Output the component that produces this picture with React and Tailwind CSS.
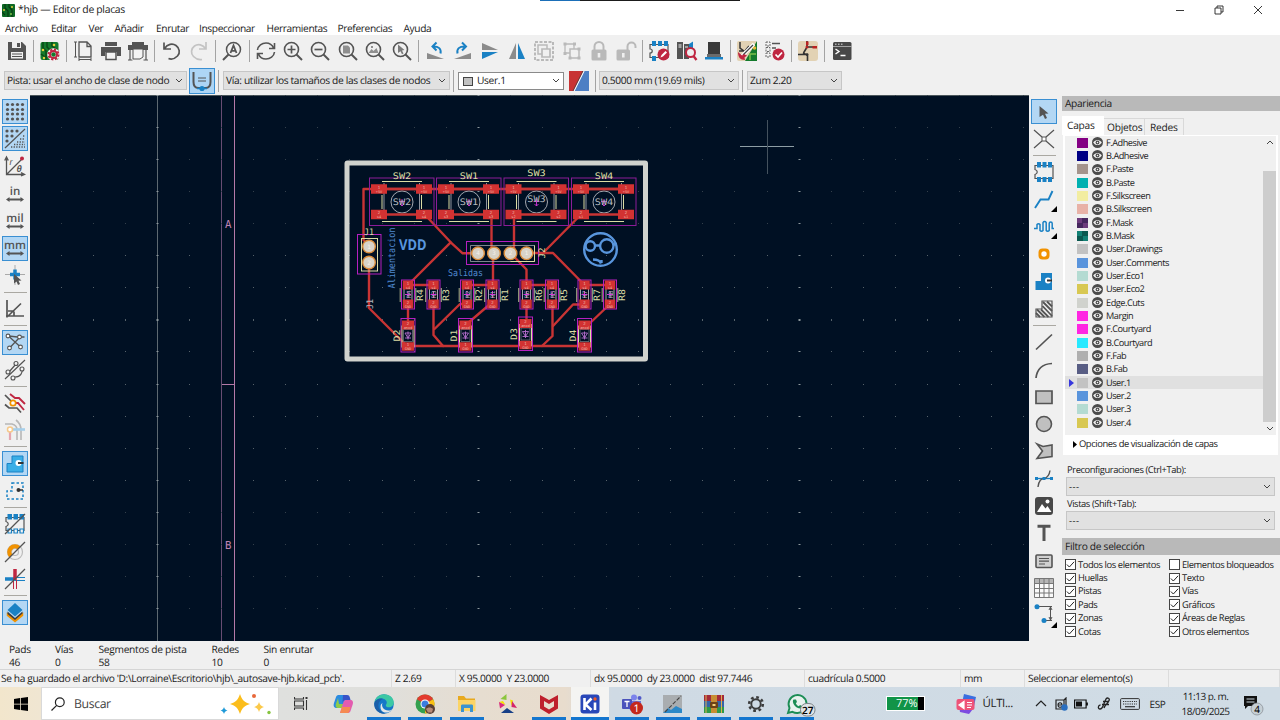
import React from "react";

const G = "#545454";
const B = "#1a81c4";
const R = "#bf2641";
const LG = "#b9b9b9";

/* ---------- icons, all drawn on a 20 x 20 grid ---------- */
const lens = (
  <>
    <circle cx="8.5" cy="8.5" r="7" stroke={G} strokeWidth="1.6" />
    <path d="M13.5 13.5L19 19" stroke={G} strokeWidth="2" />
  </>
);
const sq = (x, y, c = G, s = 2) => <rect key={x + "-" + y} x={x} y={y} width={s} height={s} fill={c} />;

const icons = {
  save: (
    <>
      <path d="M1 1h14l4 4v14H1z" fill={G} />
      <path d="M5 1h9v6H5z" fill="#f0f0f0" />
      <path d="M10 2h3v4h-3z" fill={G} />
      <path d="M4 11h12v6.500H4z" fill="#f0f0f0" />
      <path d="M5 13h10M5 15.500h10" stroke={G} strokeWidth="1" />
    </>
  ),
  board: (
    <>
      <rect x="0.500" y="1" width="18" height="18" rx="2" fill="#137a2c" />
      <path d="M3 1v6l3 3v9M7 1v5l4 4M12 1v4l5 4M1 13l4 3" stroke="#0a4a17" strokeWidth="1.500" />
      <circle cx="3" cy="9" r="1.300" fill="#e3d13c" />
      <circle cx="14" cy="4" r="1.300" fill="#e3d13c" />
      <circle cx="4" cy="17" r="1.200" fill="#e3d13c" />
      <circle cx="13.500" cy="13.500" r="4.300" stroke="#f3f3f3" strokeWidth="4" />
      <circle cx="13.500" cy="13.500" r="5" stroke={R} strokeWidth="2" strokeDasharray="2.200 1.700" />
      <circle cx="13.500" cy="13.500" r="3.500" stroke={R} strokeWidth="2" />
    </>
  ),
  page: (
    <>
      <path d="M5 1h8l4 4v11H5zM13 1v4.500h4" stroke={G} strokeWidth="1.300" />
      <path d="M1.500 1v15M0 1h3M0 16h3M5 18.500h12M5 17v3M17 17v3" stroke={G} strokeWidth="1" />
    </>
  ),
  print: (
    <>
      <path d="M4 1h12v4H4zM0 6h20v9h-4v-4H4v4H0z" fill={G} />
      <path d="M5 11h10v7.500H5z" stroke={G} strokeWidth="1.500" fill="#f4f4f4" />
    </>
  ),
  plot: (
    <>
      <path d="M4 1h12v3H4zM0 4h20v5H0z" fill={G} />
      <path d="M5 8h10v8l-3 2H5z" stroke={G} strokeWidth="1" fill="#f4f4f4" />
      <path d="M2 9v10M18 9v10M0 19h4.500M15.500 19H20" stroke={G} strokeWidth="1.200" />
    </>
  ),
  undo: <path d="M2 1.500v6.500h7M2.500 7.500C5.500 3 10.500 2 14 4.500s4.500 7.500 1.500 10.500-6.500 3.500-9 2.500" stroke={G} strokeWidth="1.700" />,
  redo: <path d="M17 1v7h-7M16.500 7.500C14 3.500 9 2.500 5.500 5s-4 7.500-1 10.500 6 3.500 8.500 3" stroke="#c3c3c3" strokeWidth="1.700" />,
  find: (
    <>
      <circle cx="11.500" cy="8.500" r="7" stroke={G} strokeWidth="1.500" />
      <path d="M6.500 13.500L1 19" stroke={G} strokeWidth="2" />
      <path d="M8.500 12l3-7.500 3 7.500M9.500 9.800h4" stroke={G} strokeWidth="1.800" />
    </>
  ),
  refresh: <path d="M1.500 9C2 4.500 6 2 10 2s6.500 2.500 7.500 5M18.500 2v5.500H13M18.500 11c-.5 4.500-4.500 7-8.500 7s-6.500-2.500-7.500-5M1.500 18v-5.500H7" stroke={G} strokeWidth="1.600" />,
  zin: <>{lens}<path d="M4.500 8.500h8M8.500 4.500v8" stroke={G} strokeWidth="1.700" /></>,
  zout: <>{lens}<path d="M4.500 8.500h8" stroke={G} strokeWidth="1.700" /></>,
  zfit: <>{lens}<path d="M5 4.500h5l2 2v6H5z" fill="#8f8f8f" /></>,
  zobj: <>{lens}<path d="M3.500 12l3-4 2 2 3-3 2 5zM6 5h2v2H6z" fill="#8f8f8f" /></>,
  zsel: <>{lens}<path d="M6 3.500l6.500 5.500-2.500.5 1.500 3-1.500.7-1.500-3L6 12z" fill="#7b7b7b" /></>,
  rotl: (
    <>
      <path d="M1 12L18 18H1z" fill="#8b8b8b" />
      <path d="M14.500 12.500c1-5-2-7-7-7M10.500 1.500L6.500 5.500l4 4" stroke={B} strokeWidth="2" />
    </>
  ),
  rotr: (
    <>
      <path d="M18 12L1 18h17z" fill="#8b8b8b" />
      <path d="M4.500 12.500c-1-5 2-7 7-7M9 1.500l4 4-4 4" stroke={B} strokeWidth="2" />
    </>
  ),
  flipv: (
    <>
      <path d="M2 2l16 7H2z" fill="#8b8b8b" />
      <path d="M2 18l16-7H2z" fill={B} />
    </>
  ),
  fliph: (
    <>
      <path d="M2 18L9 2v16z" fill="#8b8b8b" />
      <path d="M18 18L11 2v16z" fill={B} />
    </>
  ),
  group: (
    <>
      <path d="M1 1h18v18H1z" stroke={LG} strokeWidth="2" strokeDasharray="3 1.500" />
      <path d="M4 4h9v9H4z" stroke={LG} strokeWidth="1.500" />
      <path d="M8 8h8v8H8z" stroke={LG} strokeWidth="1.700" fill="#f0f0f0" />
    </>
  ),
  ungroup: (
    <>
      <path d="M3 3h9v9H3z" stroke={LG} strokeWidth="1.300" />
      <path d="M8 8h9v9H8z" stroke={LG} strokeWidth="1.500" fill="#f0f0f0" />
      {[[1.5, 1.5], [11, 1.5], [1.5, 11], [6.5, 15.5], [15.5, 6.5], [15.5, 15.5]].map(([x, y]) => sq(x, y, LG, 3))}
    </>
  ),
  lock: (
    <>
      <rect x="2.500" y="8.500" width="15" height="11" rx="1.500" fill={LG} />
      <path d="M5.500 9V5.500a4.500 4.500 0 019 0V9" stroke={LG} strokeWidth="2" />
      <path d="M8.700 12h2.600v4.500H8.700z" fill="#efefef" />
    </>
  ),
  unlock: (
    <>
      <rect x="0.500" y="8.500" width="13.500" height="11" rx="1.500" fill={LG} />
      <path d="M11.500 9V5.500a4 4 0 018 0V7" stroke={LG} strokeWidth="2" />
      <path d="M6 12h2.600v4.500H6z" fill="#efefef" />
    </>
  ),
  fpedit: (
    <>
      <path d="M1 3.500v4.500c3 0 3 4 0 4v4.500h18v-13z" stroke={G} strokeWidth="1.200" />
      <path d="M3 0h4v5H3zM9 0h4v5H9zM15 0h4v5h-4zM3 15h4v5H3z" fill={B} />
      <circle cx="14.500" cy="13.500" r="6" fill={R} />
      <path d="M11.500 16.500l1-2.500 4-4 1.500 1.500-4 4z" fill="#fff" />
    </>
  ),
  lib: (
    <>
      <path d="M0 1h6v17H0zM7 3h5v15H7z" fill={G} />
      <path d="M1.500 4h3M1.500 6h3M8 6h3" stroke="#eee" strokeWidth="1" />
      <path d="M12 3l4-2.500V12l-4 3z" fill={B} />
      <circle cx="13.500" cy="11.500" r="4.500" stroke={R} strokeWidth="2" fill="#eee" />
      <path d="M16.500 15l3 4" stroke={R} strokeWidth="2.400" />
    </>
  ),
  chip: (
    <>
      <path d="M4 1h12v12H4z" fill="#3a3a3a" />
      <path d="M3 13h14v3H3z" fill="#6b6b6b" />
      <path d="M1 16h18v2.500H1z" fill={B} />
    </>
  ),
  upd: (
    <>
      <rect x="0" y="0" width="20" height="20" rx="2" fill="#e2d2b4" />
      <path d="M20 0v20H8z" fill="#137a2c" />
      <path d="M3 1v6l4 3M7 10H2M8 10l4-5" stroke="#333" strokeWidth="1.500" />
      <circle cx="17.500" cy="7" r="1.800" fill="#e3b83c" />
      <path d="M13 19v-6h6" stroke="#7cc04a" strokeWidth="1.500" />
      <path d="M17 3L5 15" stroke="#fff" strokeWidth="3.500" />
      <path d="M16 4L6 14" stroke="#444" strokeWidth="1.300" />
      <path d="M1 11c0 5 2 8 7 8l-.5-2.500 2.500-2-3-1.500-2 1.500z" fill={R} />
    </>
  ),
  drc: (
    <>
      <path d="M1 1h4v4H1zM1 6.500h4v4H1zM1 12h4v4H1z" stroke="#666" strokeWidth="1" strokeDasharray="2 1" />
      <path d="M7 2.500h8M7 7h4" stroke={G} strokeWidth="1.300" />
      <circle cx="13.500" cy="13.500" r="6" fill={R} />
      <path d="M10.500 13.500l2.500 2.500 4-4.500" stroke="#fff" strokeWidth="1.700" />
    </>
  ),
  sch: (
    <>
      <rect x="0" y="0" width="20" height="20" rx="3" fill="#e2d2b4" />
      <path d="M9 0v5M9 6h10M8.500 7l-3 5M0 13.500h9.500V20M5 12l4 2" stroke="#333" strokeWidth="1.600" />
      <path d="M8 .5h2.500v3.500H8zM14.500 5H19v2.500h-4.500z" fill="#b22" />
      <circle cx="9" cy="6" r="1.500" fill="#b22" />
      <circle cx="9" cy="13.500" r="1.300" fill="#333" />
    </>
  ),
  term: (
    <>
      <rect x="1" y="1" width="18.500" height="18" rx="1.500" fill="#484848" />
      <path d="M1 5.500h18.500" stroke="#bbb" strokeWidth="0.800" />
      <path d="M3 3.200h1.500M6 3.200h1.500M9 3.200h1.500" stroke="#ddd" strokeWidth="1" />
      <path d="M3.500 8l3.500 2.500L3.500 13M8.500 14.500h5" stroke="#fff" strokeWidth="1.400" />
    </>
  ),
  grid: <>{[1.5, 6.5, 11.5, 16.5].flatMap((x) => [1.5, 6.5, 11, 16].map((y) => <circle key={x + "," + y} cx={x + 1} cy={y + 1} r="1.600" fill={G} />))}</>,
  gridov: (
    <>
      {[[2, 2], [7, 2], [12, 2], [2, 7], [7, 7], [2, 12]].map(([x, y]) => <circle key={x + "," + y} cx={x} cy={y} r="1.600" fill={G} />)}
      <path d="M0 19L20 0" stroke={G} strokeWidth="1.200" />
      <path d="M6 18h14M9 15.500h11M12 13h8M15 10h5M18 7h2" stroke={G} strokeWidth="1.300" strokeDasharray="1.300 1.300" />
    </>
  ),
  polar: (
    <>
      <path d="M1.500 1.500v17H19M1.500 18.500L18 2M-.3 4.500L1.500 1l1.800 3.500M16 16.700l3.500 1.800L16 20" stroke={G} strokeWidth="1.300" />
      <circle cx="17" cy="2.500" r="2" fill={R} />
      <text x="4.500" y="9" fontSize="9" fontStyle="italic" fontFamily="Liberation Sans, sans-serif" fill={G}>r</text>
      <text x="11.500" y="15.500" fontSize="9.500" fontWeight="bold" fontStyle="italic" fontFamily="Liberation Sans, sans-serif" fill={G}>θ</text>
    </>
  ),
  cursor: (
    <>
      <path d="M0 9.500h20M10 0v20" stroke="#aaa" strokeWidth="1" />
      <path d="M5 9.500h10M10 4.500v10" stroke={B} strokeWidth="3.500" />
      <path d="M9 9l7.500 6.500-3 .3 1.500 3.200-2 1-1.500-3.400L9 18.500z" fill={G} />
    </>
  ),
  angle: <path d="M2 1v17.500M1 17h18M2 18L16 4.500M9 12.500V17M3 12h5" stroke={G} strokeWidth="1.700" />,
  rats: (
    <>
      <path d="M3.500 4L16 15.500M4.500 16L15 5M3.500 4l9 1h7" stroke={G} strokeWidth="1.300" />
      {[[3, 4], [14.5, 5], [4.500, 16], [15.500, 15]].map(([x, y]) => <circle key={x} cx={x} cy={y} r="1.900" stroke={G} strokeWidth="1.100" fill="#fff" />)}
    </>
  ),
  ratcurve: (
    <>
      <path d="M0 19L20 0M4 12l7-8M10 17c6 0 7-4 8-9" stroke={G} strokeWidth="1.200" />
      {[[11, 3.5], [3, 12], [8, 18], [17, 9]].map(([x, y]) => <circle key={x} cx={x} cy={y} r="2" stroke={G} strokeWidth="1.100" fill="#f4f4f4" />)}
    </>
  ),
  netcol: (
    <>
      <path d="M0 2l9 9M0 11.500l4 3.500h8l4 4.500" stroke={G} strokeWidth="1.700" />
      <path d="M5 1l5 4h4l6 6M8 10h5l6 7" stroke={R} strokeWidth="1.900" />
      <circle cx="8" cy="10" r="2.700" stroke="#f19200" strokeWidth="1.700" fill="#fff" />
    </>
  ),
  contrast: (
    <>
      <path d="M0 4h7c4 1 5 3 5 6v10M11 0c4 3 5 6 5 10v10" stroke="#b7b7b7" strokeWidth="1.600" />
      <path d="M5 9.500h15" stroke="#a6cfea" strokeWidth="2.600" />
      <path d="M5 11v9" stroke="#e5a6ae" strokeWidth="2.200" />
      <circle cx="5" cy="9.500" r="2.500" stroke="#f6c98a" strokeWidth="1.500" fill="#fff" />
    </>
  ),
  zfill: (
    <>
      <path d="M7 2h11v16H2V9.500h5z" fill="#3aaee6" stroke={B} strokeWidth="1" />
      <circle cx="13.500" cy="9" r="3" fill="#fff" />
      <path d="M13 9h5.500" stroke="#333" strokeWidth="2" />
    </>
  ),
  zout2: (
    <>
      <path d="M7 2h11v16H2v-8h5z" stroke={B} strokeWidth="1.500" strokeDasharray="2.500 2" />
      <circle cx="13.500" cy="9" r="2" fill="#333" />
      <path d="M13 9h5" stroke="#333" strokeWidth="1.500" />
    </>
  ),
  padsk: (
    <>
      <path d="M1 3.500v4c3 1 3 4 0 5v4h18v-13z" stroke={G} strokeWidth="1.200" />
      <path d="M2.500 0H7v5.500H2.500zM8.500 0H13v5.500H8.500zM14.500 0h4.500v5.500h-4.500z" fill={B} />
      <path d="M3 15h3.500v4H3zM9 15h3.500v4H9zM15 15h3.500v4H15z" stroke={B} strokeWidth="1.200" fill="#f4f4f4" />
      <path d="M0 20L20 0" stroke={G} strokeWidth="1.200" />
    </>
  ),
  viask: (
    <>
      <circle cx="10" cy="10" r="7.500" stroke="#bbb" strokeWidth="1.200" />
      <circle cx="10" cy="10" r="3.500" stroke="#bbb" strokeWidth="1.200" />
      <path d="M4.500 15.500A7.600 7.600 0 1115.500 4.500l-3 3A3.500 3.500 0 107.500 12.500z" fill="#f19200" />
      <path d="M0 20L20 0" stroke={G} strokeWidth="1.200" />
    </>
  ),
  tracksk: (
    <>
      <path d="M0 10h11" stroke={B} strokeWidth="3.500" />
      <path d="M10 8.500h10M10 11.500h10" stroke={B} strokeWidth="1" />
      <path d="M10 0v11" stroke={R} strokeWidth="3.500" />
      <path d="M8.500 11v9M11.500 11v9" stroke={R} strokeWidth="1" />
      <path d="M0 20L20 0" stroke={G} strokeWidth="1.200" />
    </>
  ),
  layers: (
    <>
      <path d="M2.500 12l7.500 6.500L17.500 12v1.500L10 19.500 2.500 13.500z" fill="#f19200" stroke="#f19200" strokeWidth="1.500" />
      <path d="M2.500 9.500l7.500 6.500 7.500-6.500v2L10 18l-7.500-6z" fill="#3c3c3c" />
      <path d="M10 1l7.500 7-7.500 6.500L2.500 8z" fill={B} />
    </>
  ),
  arrow: <path d="M5.500 4l9 7.500-3.500.3 2 4.200-2 1-2-4.300L5.500 15z" fill={G} />,
  cross: (
    <>
      <path d="M0 1l8 7M20 1l-8 7M0 19l8-7M20 19l-8-7" stroke={G} strokeWidth="1.200" />
      <path d="M8 8h4v4H8z" stroke={G} strokeWidth="1" fill="#fff" />
    </>
  ),
  fp: (
    <>
      <path d="M1 3.500v4c3 1 3 4 0 5v4h18v-13z" stroke={G} strokeWidth="1.200" />
      <path d="M3 0h4v5.500H3zM8.500 0h4v5.500h-4zM14 0h4v5.500h-4zM3 15h4v5H3zM8.500 15h4v5h-4zM14 15h4v5h-4z" fill={B} />
    </>
  ),
  track: <path d="M1 18L6.500 9.500h8L18.500 1" stroke={B} strokeWidth="1.900" />,
  tune: <path d="M0 11.500h3V7.500a2 2 0 013 0v6a2 2 0 003 0v-8a1.800 1.800 0 013.200 0v8a1.800 1.800 0 003 0V6.500a1.500 1.500 0 013 0v5H20" stroke={B} strokeWidth="1.500" />,
  via: <><rect x="4.500" y="4.500" width="11" height="11" rx="4" fill="#f19200" /><circle cx="10" cy="10" r="2.700" fill="#fff" /></>,
  zone: (
    <>
      <path d="M7 1h11v17H1.500V9H7z" fill={B} />
      <circle cx="14" cy="8.500" r="3" fill="#fff" />
      <path d="M13 8.500h5" stroke="#333" strokeWidth="2" />
    </>
  ),
  hatch: (
    <>
      <path d="M8 2h10v16H2v-8h6z" stroke={G} strokeWidth="1.200" />
      <path d="M9 3l9 9M13 2.500l5 5M8.500 7l9.500 10M7 10.500l7.500 7.500M3 10.500l7.500 7.500M2 14l4 4" stroke={G} strokeWidth="1.800" />
    </>
  ),
  line: <path d="M2 17.500L18 2.500" stroke={G} strokeWidth="1.700" />,
  arc: <path d="M2 18C3 9 8 4 18 3.500" stroke={G} strokeWidth="1.700" />,
  rect: <path d="M2 4h16v12.500H2z" stroke={G} strokeWidth="1.700" fill="#c0c0c0" />,
  circ: <circle cx="10" cy="10" r="7.500" stroke={G} strokeWidth="1.600" fill="#c0c0c0" />,
  poly: <path d="M3 3l6 2.500L18 4v11.500L3 17.500 8.500 10z" stroke={G} strokeWidth="1.600" fill="#c0c0c0" />,
  bez: (
    <>
      <path d="M1 9.500h18" stroke={B} strokeWidth="1.300" />
      <path d="M4 18C5 10 8 10 10 9.500s5-1 6-8" stroke={G} strokeWidth="1.400" />
      <path d="M1 8h3v3H1zM8.500 8h3v3h-3zM16 8h3v3h-3z" fill={B} />
    </>
  ),
  img: (
    <>
      <rect x="1" y="1" width="18" height="18" rx="3" fill="#484848" />
      <path d="M3 16l5-8 3.500 4.500L13.500 10l4 6z" fill="#fff" />
      <circle cx="13.500" cy="5.500" r="2" fill="#fff" />
    </>
  ),
  text: <path d="M3.500 3.300h13M10 3v15" stroke={G} strokeWidth="3" />,
  tbox: (
    <>
      <rect x="2" y="4" width="16" height="12.500" rx="1" stroke={G} strokeWidth="1.600" fill="#d0d0d0" />
      <path d="M5 7.500h10M5 10.200h10M5 13h6" stroke={G} strokeWidth="1.200" />
    </>
  ),
  table: (
    <>
      <path d="M.5.5h19v19H.5z" fill="#fafafa" />
      <path d="M.5.5h19v5H.5z" fill="#b5b5b5" />
      <path d="M.5.5h19v19H.5zM.5 5.500h19M.5 10.500h19M.5 15h19M5.500.5v19M10 .5v19M15 .5v19" stroke="#777" strokeWidth="1" />
    </>
  ),
  dim: (
    <>
      <path d="M3 1.500h15M9 15.500h9" stroke={G} strokeWidth="1.200" />
      <path d="M16.500 2v13M15 5l1.500-3L18 5M15 12l1.500 3 1.500-3" stroke={G} strokeWidth="1" />
      <circle cx="3" cy="1.800" r="2.500" fill={B} />
      <circle cx="10" cy="15.500" r="2.500" fill={B} />
    </>
  ),
};

function Icon({ name }) {
  return (
    <svg viewBox="0 0 20 20" className="h-5 w-5 shrink-0 overflow-visible" fill="none">
      {icons[name]}
    </svg>
  );
}

const topTools = [
  "save", "|", "board", "|", "page", "print", "plot", "|", "undo", "redo", "|", "find", "|", "refresh", "zin", "zout",
  "zfit", "zobj", "zsel", "|", "rotl", "rotr", "flipv", "fliph", "group", "ungroup", "lock", "unlock", "|", "fpedit",
  "lib", "chip", "|", "upd", "drc", "|", "sch", "|", "term",
];

function TopToolbar() {
  return (
    <div className="flex h-[32px] items-center pl-[3px]">
      {topTools.map((t, i) =>
        t === "|" ? (
          <div key={i} className="flex w-[6.4px] shrink-0 justify-center"><div className="h-[22px] w-px bg-[#a3a3a3]" /></div>
        ) : (
          <div key={i} className="flex w-[27.2px] shrink-0 justify-center"><Icon name={t} /></div>
        )
      )}
    </div>
  );
}

function Chevron({ up }) {
  return (
    <svg viewBox="0 0 8 5" className="h-[5px] w-[8px] shrink-0" fill="none">
      <path d={up ? "M1 4l3-3 3 3" : "M1 1l3 3 3-3"} stroke="#444" strokeWidth="1" />
    </svg>
  );
}

function Combo({ className, children }) {
  return (
    <div className={"flex shrink-0 items-center justify-between border pr-[3px] whitespace-nowrap " + className}>
      <div className="flex items-center pt-px">{children}</div>
      <Chevron />
    </div>
  );
}

const Sep = ({ className }) => <div className={"h-[22px] w-px shrink-0 bg-[#a3a3a3] " + className} />;

function OptionsBar() {
  const c = "h-[19px] border-[#c6c6c6] bg-[#e1e1e1] pl-[2px]";
  return (
    <div className="flex h-[27px] items-center pl-1 text-[10.200px] tracking-[-0.340px]">
      <Combo className={c + " w-[183px]"}>Pista: usar el ancho de clase de nodo</Combo>
      <div className="ml-[2px] flex h-[26px] w-[26px] shrink-0 items-center justify-center border border-[#3a8fd2] bg-[#add5f5]">
        <svg viewBox="0 0 20 20" className="h-5 w-5 overflow-visible" fill="none">
          <path d="M1.500 1v10c0 4 2 6 5 6h7c3 0 5-2 5-6V1" stroke={G} strokeWidth="2" />
          <path d="M6 7h8M6 10h8" stroke={G} strokeWidth="1" />
          <path d="M5 17.500h10" stroke={B} strokeWidth="1.500" />
          <circle cx="10" cy="17.500" r="2.600" fill={B} />
        </svg>
      </div>
      <Sep className="mr-[4px] ml-[3px]" />
      <Combo className={c + " w-[227px]"}>Vía: utilizar los tamaños de las clases de nodos</Combo>
      <Sep className="mr-[4px] ml-[3px]" />
      <Combo className="h-[18px] w-[106px] border-[#8a8a8a] bg-white pl-[4px]">
        <span className="mr-[4px] h-[9px] w-[10px] border border-[#444] bg-[#c2c2c2]" />User.1
      </Combo>
      <svg viewBox="0 0 20 20" className="ml-[5px] h-5 w-5 shrink-0">
        <path d="M0 0h15L5 20H0z" fill="#c83434" />
        <path d="M15 0h5v20H5z" fill="#4d7fc4" />
        <path d="M15 0L5 20" stroke="#fff" strokeWidth="1.200" />
        <path d="M14 0L4 20" stroke="#333" strokeWidth="0.700" />
      </svg>
      <Sep className="mr-[3px] ml-[6px]" />
      <Combo className={c + " w-[140px]"}>0.5000 mm (19.69 mils)</Combo>
      <Sep className="mr-[4px] ml-[3px]" />
      <Combo className={c + " w-[95px]"}>Zum 2.20</Combo>
    </div>
  );
}

const Unit = ({ children }) => (
  <div className="flex w-5 flex-col items-center leading-none">
    <span className="text-[11.500px] leading-[11px] font-semibold text-[#545454]">{children}</span>
    <svg viewBox="0 0 18 5" className="h-[5px] w-[18px]"><path d="M0 2.500L3.500 0v1.500h11V0L18 2.500 14.500 5V3.500h-11V5z" fill={G} /></svg>
  </div>
);

const leftTools = [
  ["grid", 1], ["gridov", 1], ["polar"], ["in"], ["mil"], ["mm", 1], ["cursor"], ["|"], ["angle"], ["|"], ["rats", 1],
  ["ratcurve"], ["|"], ["netcol"], ["contrast"], ["|"], ["zfill", 1], ["zout2"], ["|"], ["padsk"], ["viask"], ["tracksk"], ["|"], ["layers", 1],
];
const rightTools = [
  ["arrow", 1], ["cross"], ["|"], ["fp"], ["track", 0, 1], ["tune", 0, 1], ["via"], ["zone"], ["hatch"], ["|"], ["line"], ["arc"],
  ["rect"], ["circ"], ["poly"], ["bez"], ["img"], ["text"], ["tbox"], ["table"], ["dim", 0, 1],
];

function SideTools({ items, className }) {
  return (
    <div className={"flex shrink-0 flex-col items-center pt-[3px] " + className}>
      {items.map(([n, on, more], i) =>
        n === "|" ? (
          <div key={i} className="flex h-[6.1px] w-[23px] shrink-0 items-center"><div className="h-px w-full bg-[#aaa8a2]" /></div>
        ) : (
          <div key={i} className="flex h-[27.3px] shrink-0 items-center">
            <div className={"relative flex h-[25px] w-[26px] items-center justify-center " + (on ? "border border-[#3a8fd2] bg-[#b3d7f4]" : "")}>
              {["in", "mil", "mm"].includes(n) ? <Unit>{n}</Unit> : <Icon name={n} />}
              {more ? (
                <svg viewBox="0 0 6 6" className="absolute right-0 bottom-0 h-[6px] w-[6px]"><path d="M6 0v6H0z" fill="#000" /></svg>
              ) : null}
            </div>
          </div>
        )
      )}
    </div>
  );
}

/* ---------- board canvas: coordinates are window pixels ---------- */
const TR = "#c83434";
const MG = "#b51fc0";
const SY = "#dcdca4";
const GY = "#b4b8be";
const mono = "'DejaVu Sans Mono', monospace";

function Lbl({ x, y, s = 9, w, fill = SY, rot, children }) {
  return (
    <text x={x} y={y} fontSize={s} fill={fill} textAnchor="middle" fontFamily={mono}
      textLength={w} lengthAdjust="spacingAndGlyphs" transform={rot ? `rotate(-90 ${x} ${y})` : undefined}>{children}</text>
  );
}

function Pad({ x, y, w, h, a, b }) {
  return (
    <g>
      <rect x={x - w / 2} y={y - h / 2} width={w} height={h} fill="#d23232" />
      <text x={x} y={y - 0.5} fontSize="4" fill="#f0b6a8" textAnchor="middle" fontFamily={mono}>{a}</text>
      <text x={x} y={y + 3.700} fontSize="3.600" fill="#f0b6a8" textAnchor="middle" fontFamily={mono}>{b}</text>
    </g>
  );
}

function Switch({ cx, name, net, dy = 0 }) {
  return (
    <g fill="none">
      <rect x={cx - 32.5} y="178" width="64.500" height="47.500" stroke="#8c1c98" />
      <path d={`M${cx - 20} 181.500h40M${cx - 20} 221.500h40M${cx - 20} 195v14M${cx + 19.500} 195v14`} stroke={SY} />
      <path d={`M${cx - 18} 183v36M${cx + 17.500} 183v36`} stroke={GY} strokeWidth="0.800" />
      <circle cx={cx} cy="202" r="11" stroke={GY} strokeWidth="0.900" />
      <path d={`M${cx - 22} 189h44M${cx - 22} 214.500h44`} stroke={TR} strokeWidth="2.400" />
      <Pad x={cx - 23} y={189} w={16} h={9.500} a="1" b="+5V" />
      <Pad x={cx + 22} y={189} w={16} h={9.500} a="1" b="+5V" />
      <Pad x={cx - 23} y={214.500} w={16} h={9.500} a="2" b={net} />
      <Pad x={cx + 22} y={214.500} w={16} h={9.500} a="2" b={net} />
      <path d={`M${cx} 199v7M${cx - 3} 201.500h6M${cx - 2} 204l2 2 2-2`} stroke="#d136d8" strokeWidth="0.900" />
      <Lbl x={cx} y={205.200 + dy} s={9} w={18.500} fill={GY}>{name}</Lbl>
      <Lbl x={cx} y={179.300 + dy} s={9} w={18.500}>{name}</Lbl>
    </g>
  );
}

function Resistor({ cx, name }) {
  return (
    <g fill="none">
      <rect x={cx - 6.500} y="280" width="13" height="29" stroke={MG} />
      <path d={`M${cx - 7.800} 288v14M${cx + 7.800} 288v14`} stroke={SY} strokeWidth="0.800" />
      <path d={`M${cx - 4} 288v14M${cx + 4} 288v14`} stroke={GY} strokeWidth="0.900" />
      <Pad x={cx} y={285} w={10.500} h={9} a="1" b="s4" />
      <Pad x={cx} y={304} w={10.500} h={9} a="2" b="GND" />
      <path d={`M${cx} 291v7M${cx - 3} 294.500h6`} stroke="#d136d8" />
      <Lbl x={cx + 2.500} y={294.500} s={6} w={8} fill={GY} rot>{name}</Lbl>
      <Lbl x={cx + 15} y={295} s={9} w={12} rot>{name}</Lbl>
    </g>
  );
}

function Diode({ cx, cy, name }) {
  return (
    <g fill="none">
      <rect x={cx - 7} y={cy - 17} width="14" height="33.500" stroke={MG} />
      <path d={`M${cx - 6} ${cy - 10}v22M${cx + 6} ${cy - 10}v22`} stroke={SY} />
      <path d={`M${cx - 4.500} ${cy - 6}h9v12h-9z`} stroke="#7a7f86" strokeWidth="0.700" />
      <Pad x={cx} y={cy - 10.500} w={12} h={9} a="2" b="anod" />
      <Pad x={cx} y={cy + 11} w={12} h={8.500} a="1" b="GND" />
      <path d={`M${cx - 3} ${cy - 2.500}h6l-3 5zM${cx - 3} ${cy + 2.500}h6M${cx} ${cy - 4}v8`} stroke="#b86fd0" strokeWidth="0.900" />
      <Lbl x={cx - 8.500} y={cy} s={9} w={12} rot>{name}</Lbl>
    </g>
  );
}

function Hole({ x, y, n }) {
  return (
    <g>
      <circle cx={x} cy={y} r="6.300" fill="#d8d3c8" stroke="#d98d3c" strokeWidth="1.400" />
      <text x={x} y={y + 2} fontSize="6" fill="#f3f0ea" textAnchor="middle" fontFamily={mono}>{n}</text>
    </g>
  );
}

const tracks = [
  "M381 189H627", "M378 189H363.500V240L369 246", "M369 263V308L407 346H584",
  "M424 214.500L428 218 450.700 242.300 462.700 253.300H478", "M450.700 242.300L411 282 408 285",
  "M491.500 214.500V247L493 253V285", "M514 214.500V249L510.500 253", "M510.500 253L526.500 269.500V285",
  "M527 253H553L584.500 285", "M581 214.500L543 253", "M408 285H433.500", "M467 285H492.500", "M526.500 285H552",
  "M584.500 285H610", "M408 304V324", "M433.500 304V335L443 346", "M434.500 329L460 304H467", "M492.500 304L489 305 468 323",
  "M526.500 304V322", "M552.500 304V336L542 346", "M553 326L573 304.500H584", "M610 304L588 325",
];

function BoardCanvas() {
  const dots = [];
  for (let i = -3; i <= 27; i++)
    for (let j = 0; j <= 17; j++) {
      const x = 157.5 + i * 32.08;
      const y = 95 + j * 32.12;
      const major = i % 10 === 0;
      if (x > 31 && x < 1029) dots.push(<rect key={i + "," + j} x={Math.floor(x) - (major ? 0.5 : 0)} y={Math.floor(y)} width={major ? 2 : 1} height={j === 7 ? 2 : 1} fill={major ? "#8c979c" : j > 4 && j < 13 ? "#56626a" : "#34404b"} />);
    }
  return (
    <svg viewBox="30 95 999 546" className="h-[546px] w-[999px] shrink-0 bg-[#001023]">
      <path d="M30 95.500h999" stroke="#4b565b" />
      <path d="M157.500 96v545" stroke="#5d6971" />
      <path d="M221.500 96v545" stroke="#684c72" />
      <path d="M234.500 96v545" stroke="#b479a8" />
      <path d="M222 384.500h12.500" stroke="#b479a8" />
      <Lbl x={228.300} y={228.300} s={11} w={6.500} fill="#c084b4">A</Lbl>
      <Lbl x={228.300} y={549} s={11} w={6.500} fill="#c084b4">B</Lbl>
      {dots}
      <rect x="347" y="163" width="298.500" height="196" rx="0.500" fill="none" stroke="#d0d2cd" strokeWidth="5" />

      <g fill="none" stroke={TR} strokeWidth="2.400" strokeLinecap="round" strokeLinejoin="round">
        {tracks.map((d) => <path key={d} d={d} />)}
      </g>

      <Switch cx={402} name="SW2" net="s4" />
      <Switch cx={469} name="SW1" net="s3" />
      <Switch cx={536.5} name="SW3" net="s2" dy={-3} />
      <Switch cx={604} name="SW4" net="s1" />

      <g fill="none">
        <rect x="357.500" y="234.500" width="23.500" height="39.500" stroke={MG} />
        <rect x="361.500" y="238.500" width="16" height="32.500" stroke={SY} />
        <rect x="466.500" y="241.500" width="72" height="23" stroke={MG} />
        <path d="M534.500 245.500v16H470.500v-16z" stroke={GY} strokeWidth="0.700" />
        <path d="M534.500 245.500v16h-24" stroke={SY} />
      </g>
      <Hole x={369} y={246.5} n="1" />
      <Hole x={369} y={262.5} n="2" />
      <Hole x={478} y={253.3} n="4" />
      <Hole x={494} y={253.3} n="3" />
      <Hole x={510.5} y={253.3} n="2" />
      <Hole x={526.5} y={253.3} n="1" />
      <Lbl x={369} y={234.500} s={9} w={10}>J1</Lbl>
      <Lbl x={372.500} y={304} s={9} w={10} fill={GY} rot>J1</Lbl>
      <Lbl x={545} y={253} s={9} w={11} rot>J2</Lbl>

      {[[408, "R4"], [433.5, "R3"], [467, "R2"], [492.5, "R1"], [526.5, "R6"], [552, "R5"], [584.5, "R7"], [610, "R8"]].map(([x, n]) => (
        <Resistor key={n} cx={x} name={n} />
      ))}
      <Diode cx={408} cy={335.5} name="D2" />
      <Diode cx={465.5} cy={335.5} name="D1" />
      <Diode cx={525.5} cy={334} name="D3" />
      <Diode cx={584.5} cy={335.5} name="D4" />

      <text x="399" y="249.500" fontSize="15" fontWeight="bold" fill="#5996dd" fontFamily="'Noto Sans', sans-serif" textLength="27.500" lengthAdjust="spacingAndGlyphs">VDD</text>
      <text x="448" y="275.700" fontSize="9.300" fill="#5189cf" fontFamily={mono} textLength="35" lengthAdjust="spacingAndGlyphs">Salidas</text>
      <text x="395" y="288.500" fontSize="9.600" fill="#5189cf" fontFamily={mono} textLength="61" lengthAdjust="spacingAndGlyphs" transform="rotate(-90 395 288.500)">Alimentacion</text>

      <g fill="none" stroke="#5996dd" strokeWidth="2.400">
        <circle cx="600.500" cy="249.500" r="16.300" />
        <circle cx="590.300" cy="246" r="4.700" />
        <circle cx="606.800" cy="246" r="6.700" />
        <path d="M595 245.500h5M613.500 245l3-2M593 259.500c4 0 7 1 8 4M601.500 263v-3" />
      </g>

      <path d="M740 146.500h54" stroke="#8d9da4" />
      <path d="M767.500 120v54" stroke="#44525e" />
    </svg>
  );
}

/* ---------- appearance panel ---------- */
const layerRows = [
  ["F.Adhesive", "bg-[#840084]"], ["B.Adhesive", "bg-[#000084]"], ["F.Paste", "bg-[#a4948c]"], ["B.Paste", "bg-[#00b0b0]"],
  ["F.Silkscreen", "bg-[#f2eda1]"], ["B.Silkscreen", "bg-[#e8b2a7]"],
  ["F.Mask", "bg-[conic-gradient(#46275e_25%,#6d3c7c_0_50%,#46275e_0_75%,#6d3c7c_0)]"],
  ["B.Mask", "bg-[conic-gradient(#0a584f_25%,#128074_0_50%,#0a584f_0_75%,#128074_0)]"],
  ["User.Drawings", "bg-[#c2c2c2]"], ["User.Comments", "bg-[#5994dc]"], ["User.Eco1", "bg-[#b4dbd2]"], ["User.Eco2", "bg-[#d8c852]"],
  ["Edge.Cuts", "bg-[#d0d2cd]"], ["Margin", "bg-[#ff26e2]"], ["F.Courtyard", "bg-[#ff26e2]"], ["B.Courtyard", "bg-[#26e9ff]"],
  ["F.Fab", "bg-[#afafaf]"], ["B.Fab", "bg-[#585d84]"], ["User.1", "bg-[#c2c2c2]"], ["User.2", "bg-[#5994dc]"],
  ["User.3", "bg-[#b4dbd2]"], ["User.4", "bg-[#d8c852]"],
];

const Eye = () => (
  <svg viewBox="0 0 12 12" className="ml-[4px] h-[11px] w-[11px] shrink-0">
    <circle cx="6" cy="6" r="6" fill="#4c4c4c" />
    <path d="M1.300 6C3.500 2.300 8.500 2.300 10.700 6 8.500 9.700 3.500 9.700 1.300 6z" fill="#f2f2f2" />
    <circle cx="6" cy="6" r="2.100" fill="#4c4c4c" />
    <circle cx="6" cy="6" r="0.800" fill="#f2f2f2" />
  </svg>
);

function Check({ label, on = true }) {
  return (
    <div className="flex h-[13.4px] items-center whitespace-nowrap">
      <span className="mr-[2px] flex h-[11px] w-[11px] shrink-0 items-center justify-center border border-[#444] bg-white">
        {on && <svg viewBox="0 0 10 10" className="h-[9px] w-[9px]" fill="none"><path d="M1 5l2.700 2.800L9 2" stroke="#222" strokeWidth="1.100" /></svg>}
      </span>
      {label}
    </div>
  );
}

function Panel() {
  return (
    <div className="flex w-[218px] shrink-0 flex-col pt-px text-[9.400px] tracking-[-0.420px] text-[#1a1a1a]">
      <div className="flex h-[15px] items-center bg-[#b9b9b9] pt-px pl-[3px] text-[10.200px] tracking-[-0.340px]">Apariencia</div>
      <div className="flex h-[24px] items-end text-[10.200px] tracking-[-0.250px]">
        <div className="flex h-[19px] w-[42px] items-center bg-white pl-[5px]">Capas</div>
        <div className="flex h-[17px] w-[41px] items-center border-t border-r border-[#d9d9d9] pt-px pl-[3px]">Objetos</div>
        <div className="flex h-[17px] w-[39px] items-center border-t border-r border-[#d9d9d9] pt-px pl-[5px]">Redes</div>
      </div>
      <div className="mr-[2px] ml-px flex h-[320px] flex-col border-2 border-t-[1px] border-white bg-white">
        <div className="flex h-[299px] bg-[#f0f0f0]">
          <div className="flex w-[199px] flex-col overflow-hidden text-[9.200px] tracking-[-0.480px]">
            {layerRows.map(([n, c]) => (
              <div key={n} className={"flex h-[13.330px] shrink-0 items-center " + (n === "User.1" ? "bg-[#e0e0e0]" : "")}>
                <span className="w-[12px] pl-[4px]">
                  {n === "User.1" && <svg viewBox="0 0 5 8" className="h-[8px] w-[5px]"><path d="M0 0l5 4-5 4z" fill="#3737dd" /></svg>}
                </span>
                <span className={"h-[10px] w-[11px] " + c} />
                <Eye />
                <span className="ml-[3px]">{n}</span>
              </div>
            ))}
          </div>
          <div className="flex w-[13px] flex-col items-center justify-between pt-[4px] pb-[4px]">
            <Chevron up />
            <div className="mt-[26px] mb-[4px] w-full flex-1 bg-[#cdcdcd]" />
            <Chevron />
          </div>
        </div>
        <div className="flex flex-1 items-center pt-px pl-[8px]">
          <svg viewBox="0 0 4 7" className="mr-[2px] h-[7px] w-[4px]"><path d="M0 0l4 3.500L0 7z" fill="#000" /></svg>
          Opciones de visualización de capas
        </div>
      </div>
      <div className="mt-[8px] flex h-[14px] items-center pt-px pl-[5px]">Preconfiguraciones (Ctrl+Tab):</div>
      <Combo className="ml-[4px] h-[19px] w-[209px] border-[#c6c6c6] bg-[#e1e1e1] pl-[2px]">
        <span className="tracking-[0.500px]">---</span>
      </Combo>
      <div className="mt-px flex h-[14px] items-center pt-px pl-[5px]">Vistas (Shift+Tab):</div>
      <Combo className="ml-[4px] h-[19px] w-[209px] border-[#c6c6c6] bg-[#e1e1e1] pl-[2px]">
        <span className="tracking-[0.500px]">---</span>
      </Combo>
      <div className="mt-[8px] flex h-[17px] items-center bg-[#b9b9b9] pt-px pl-[3px] text-[10.200px] tracking-[-0.300px]">Filtro de selección</div>
      <div className="mt-[3px] flex pl-[3px]">
        <div className="w-[104px] shrink-0">
          {["Todos los elementos", "Huellas", "Pistas", "Pads", "Zonas", "Cotas"].map((l) => <Check key={l} label={l} />)}
        </div>
        <div>
          {["Elementos bloqueados", "Texto", "Vías", "Gráficos", "Áreas de Reglas", "Otros elementos"].map((l, i) => <Check key={l} label={l} on={i > 0} />)}
        </div>
      </div>
    </div>
  );
}

/* ---------- taskbar ---------- */
const taskIcons = {
  copilot: (
    <>
      <path d="M6 1h8l-4 13H4C1 14 0 12 1 9l2-6c.5-1.500 1.500-2 3-2z" fill="#2a8be0" />
      <path d="M5 4c-1 4-3 6-2 9 .5 1 2 1 3 1h4l1-4H6z" fill="#8ecb4a" />
      <path d="M10 1h4c2 0 2.500 1 3 3l.5 2H13c-2 0-3 1-3.500 3z" fill="#3753c8" />
      <path d="M14 19H7l3.500-11c.5-1.500 1.500-2 3-2H17c3 0 3.500 2 2.500 5l-2 6c-.5 1.500-1.500 2-3.500 2z" fill="#e35bb0" />
      <path d="M14 19H7l2-6h8.500l-1 4c-.5 1.500-1 2-2.500 2z" fill="#f58a52" />
    </>
  ),
  edge: (
    <>
      <circle cx="10" cy="10" r="9.800" fill="#1677c8" />
      <path d="M.3 9C1 3 5.500.2 10 .2c6 0 9.800 4 9.800 8.300 0 3-2.300 4.800-5 4.800-2 0-3-1-3-1.800 0-1 1-1.200 1-3C12.800 6 10 4.500 7 4.500 4 4.500 1 6.500.3 9z" fill="#3cc8a4" />
      <path d="M.3 9C1.500 5.500 6 3.800 9 5c-3 1-5 4-4.500 7.500C5 16 8 19 12 19.500 5 20.500-.3 15.500.3 9z" fill="#1b5fa8" />
      <path d="M8.500 9c-1.500 3 1 7.500 6 7.500 1.500 0 3-.5 4-1.300-4 5.500-12 4-12-2C6.500 11 7 9.800 8.500 9z" fill="#e4e6e8" />
    </>
  ),
  chrome: (
    <>
      <circle cx="10" cy="10" r="9.500" fill="#34a04e" />
      <path d="M10 10L1.800 5.200A9.500 9.500 0 0118.200 5.200z" fill="#e33b2e" />
      <path d="M10 10l8.200-4.800A9.500 9.500 0 0110 19.500z" fill="#fbc116" />
      <circle cx="10" cy="10" r="4.500" fill="#fff" />
      <circle cx="10" cy="10" r="3.500" fill="#3b7de0" />
      <circle cx="15" cy="15" r="5" fill="#5a4036" />
      <path d="M11 15c2-2 5-2 7 0l-1 3.500h-4z" fill="#b98b78" />
    </>
  ),
  explorer: (
    <>
      <path d="M1 2h6l2 2.500h9V16H1z" fill="#e8a91e" />
      <path d="M1 6h17.500v11H1z" fill="#fbd465" />
      <path d="M4 18v-6c0-1 .5-1.500 1.500-1.500h9c1 0 1.500.5 1.500 1.500v6h-3v-4H7v4z" fill="#3b93cf" />
    </>
  ),
  pinwheel: (
    <>
      <path d="M8.500 0v6L2.500 5z" fill="#8cc63e" />
      <path d="M1 8l4-1 2.500 4z" fill="#f4e100" />
      <path d="M1 8l6 3-5 3.500z" fill="#d8287c" />
      <path d="M12 5.500l3 1-1.500 5.500z" fill="#f4e100" />
      <path d="M14 7l5 7-5.500-1z" fill="#d4246c" />
      <path d="M9 14l7 5H3z" fill="#173f87" />
    </>
  ),
  shield: <path d="M1 1l9 5 9-5v13.500L10 20l-9-5.500zM5 7v5.500l5 3 5-3V7l-5 3z" fill="#bf1f2c" fillRule="evenodd" />,
  kicad: (
    <>
      <rect x="0.500" y="0.500" width="19" height="19" rx="3" fill="#2947b8" />
      <path d="M4.500 4v12M11.500 4.500l-6 6 6 5.500" stroke="#fff" strokeWidth="2.600" fill="none" />
      <path d="M15 8.500V16" stroke="#fff" strokeWidth="2.600" />
      <circle cx="15" cy="5" r="1.700" fill="#f05b28" />
    </>
  ),
  teams: (
    <>
      <circle cx="12" cy="3.500" r="3" fill="#7b83eb" />
      <circle cx="17.500" cy="4" r="2" fill="#5059c9" />
      <path d="M7 7h12v6c0 3-3 5-6 5s-6-2-6-5z" fill="#6a73d8" />
      <rect x="0" y="5" width="10" height="10" rx="1" fill="#4b53bc" />
      <path d="M2.500 7.500h5M5 7.500V13" stroke="#fff" strokeWidth="1.300" />
      <circle cx="14.500" cy="14" r="6.500" fill="#c4281c" />
      <text x="14.500" y="18" fontSize="10.500" fill="#fff" textAnchor="middle" fontFamily="'Noto Sans', sans-serif">1</text>
    </>
  ),
  scope: (
    <>
      <rect x="0" y="1" width="19" height="18" fill="#a9adb0" />
      <path d="M0 19l5-5 3 2 5-4 6 3v4z" fill="#2b88c8" />
      <path d="M2 18L18 2" stroke="#444" strokeWidth="1.100" strokeDasharray="4 1.500" />
    </>
  ),
  rar: (
    <>
      <path d="M0 1h20v6H0z" fill="#a42a3a" />
      <path d="M0 7h20v6H0z" fill="#3565a8" />
      <path d="M0 13h20v6H0z" fill="#2e9a4a" />
      <path d="M7 1h6v18H7z" fill="#c88d33" />
      <path d="M2 1v18M17.500 1v18" stroke="#e0b050" strokeWidth="1" />
      <rect x="6" y="8" width="8" height="6" rx="1" fill="#6e4216" />
      <path d="M8.500 10h3v2h-3z" fill="#f3d27a" />
    </>
  ),
  gear: (
    <>
      <circle cx="10" cy="10" r="6.800" stroke="#3c3c3c" strokeWidth="2.600" strokeDasharray="2.700 2.640" fill="none" />
      <circle cx="10" cy="10" r="4.700" stroke="#3c3c3c" strokeWidth="1.900" fill="none" />
    </>
  ),
  whats: (
    <>
      <path d="M1 19l1.500-5A9 9 0 1110 19c-1.700 0-3.200-.5-4.500-1.200z" stroke="#1c8d55" strokeWidth="1.900" fill="#e8f2ee" />
      <path d="M6.500 5.500c-2 2 1 9 7.500 9 1.500-1 1.500-2 1-2.500l-2-1-1.200 1.200c-1.300-.5-2.300-1.500-3-3L10 8 9 5.500z" fill="#1c8d55" />
      <rect x="13.500" y="9.500" width="14.500" height="12.500" rx="6" fill="#dfe4e6" stroke="#7c8388" strokeWidth="1" />
      <text x="20.700" y="19.500" fontSize="10" fill="#000" textAnchor="middle" fontFamily="'Noto Sans', sans-serif" fontWeight="600">27</text>
    </>
  ),
};
const taskItems = [
  ["copilot", 0], ["edge", 1], ["chrome", 1], ["explorer", 1], ["pinwheel", 0], ["shield", 1], ["kicad", 2], ["teams", 1], ["scope", 1], ["rar", 1], ["gear", 1], ["whats", 1],
];

function Taskbar() {
  return (
    <div className="flex h-[33px] shrink-0 bg-[linear-gradient(90deg,#f2e6cc_0px,#f0e6d2_40px,#dfe0de_280px,#dfdfdc_380px,#e6ddd0_480px,#e8dccd_565px,#cfdae4_612px,#d0dce5_1280px)]">
      <div className="flex w-[41px] items-center justify-center">
        <svg viewBox="0 0 14 14" className="h-[14px] w-[14px]"><path d="M0 2l6-.9v5.600H0zM6.800 1L14 0v6.700H6.800zM0 7.400h6V13l-6-.9zM6.800 7.400H14V14l-7.200-1z" fill="#000" /></svg>
      </div>
      <div className="flex w-[238px] items-center border border-[#d9d9d9] bg-white pl-[9px]">
        <svg viewBox="0 0 14 14" className="h-[14px] w-[14px]" fill="none"><circle cx="8.800" cy="5.200" r="4.400" stroke="#222" strokeWidth="1.200" /><path d="M5.700 8.300L.5 13.500" stroke="#222" strokeWidth="1.200" /></svg>
        <span className="ml-[9px] w-[146px] pt-px text-[12.300px] tracking-[-0.400px] text-[#444]">Buscar</span>
        <svg viewBox="0 0 52 22" className="h-[22px] w-[52px]">
          <path d="M20 1c2 6 4 8 10 10-6 2-8 4-10 10-2-6-4-8-10-10 6-2 8-4 10-10z" fill="#fbbd1c" />
          <path d="M39 9c1 3 2 4 5 5-3 1-4 2-5 5-1-3-2-4-5-5 3-1 4-2 5-5z" fill="#fbc94a" />
          <path d="M4 14c.5 2 1.500 3 3.500 3.500C5.500 18 4.500 19 4 21c-.5-2-1.500-3-3.500-3.500C2.500 17 3.500 16 4 14z" fill="#1f9ad8" />
          <circle cx="34" cy="3" r="2" fill="#e8683a" />
          <circle cx="49" cy="19.500" r="1.700" fill="#86c440" />
        </svg>
      </div>
      <div className="flex w-[43px] items-center justify-center">
        <svg viewBox="0 0 14 13" className="h-[13px] w-[14px]" fill="none"><path d="M.5 0v2h9V0M.5 4h9v5h-9zM.5 13v-2h9v2M12.500 3v10" stroke="#333" strokeWidth="1.100" /><path d="M11.500 0h2v2h-2z" fill="#333" /></svg>
      </div>
      {taskItems.map(([n, s]) => (
        <div key={n} className="flex w-[41.300px] shrink-0 flex-col items-center">
          <div className={"flex h-[30px] w-[38px] items-center justify-center pt-[3px] " + (s === 2 ? "bg-[#f4f4f2]" : "")}>
            <svg viewBox="0 0 20 20" className="h-5 w-5 overflow-visible" fill="none">{taskIcons[n]}</svg>
          </div>
          <div className={"h-[3px] " + (s === 2 ? "w-[38px] bg-[#1476cf]" : s ? "w-[34px] bg-[#1476cf]" : "w-0")} />
        </div>
      ))}
      <div className="flex flex-1 items-center pl-[68px] text-[11px] text-[#222]">
        <div className="flex h-[15px] w-[39px] shrink-0 items-center border border-white bg-black">
          <div className="flex h-full w-[31px] items-center justify-end bg-[#119448] pt-px text-[11px] text-white">77%</div>
        </div>
        <svg viewBox="0 0 20 20" className="ml-[31px] h-5 w-5 shrink-0" fill="none">
          <path d="M8 0l12 3-2 9L6 9z" fill="#3b6fe0" />
          <path d="M3 12l14 3-4 5-9-2z" fill="#7d4be0" />
          <rect x="0.500" y="5" width="18" height="11" rx="2" fill="#ee5378" />
          <path d="M3 11l5-3.500v7zM11 8.500h5M11 11h5M11 13.500h4" stroke="#fff" strokeWidth="1.200" fill="#fff" />
        </svg>
        <span className="ml-[7px] w-[52px] shrink-0 text-[11.500px] tracking-[-0.400px]">ÚLTI...</span>
        <svg viewBox="0 0 12 7" className="h-[7px] w-[12px] shrink-0" fill="none"><path d="M1 6l5-5 5 5" stroke="#222" strokeWidth="1.200" /></svg>
        <svg viewBox="0 0 14 14" className="ml-[7px] h-[14px] w-[14px] shrink-0" fill="none">
          <path d="M2 3h8v9H2zM10 3l2-2v8" stroke="#222" strokeWidth="1.200" />
          <path d="M4 8h4c0-3-4-3-4 0s3 2.500 4 1.500" stroke="#222" strokeWidth="1.100" />
          <circle cx="10.500" cy="10.500" r="3.200" fill="#2a6fc0" />
        </svg>
        <svg viewBox="0 0 14 10" className="ml-[6px] h-[10px] w-[14px] shrink-0" fill="none"><path d="M.6 1h11.500v8H.6zM13.300 3.500v3" stroke="#111" strokeWidth="1.200" /><path d="M2 2.500h6v5H2z" fill="#111" /></svg>
        <svg viewBox="0 0 14 14" className="ml-[9px] h-[14px] w-[14px] shrink-0" fill="none"><path d="M3.500 8C1 8 .5 12 3 12c3.500 0 3-5 6-10 1.500-2 4-.5 3 1.500-1 3-4 4-5 7.500M6 4.500h5.500M5 7.500h7" stroke="#222" strokeWidth="1.300" /></svg>
        <svg viewBox="0 0 20 12" className="ml-[9px] h-[12px] w-[20px] shrink-0" fill="none"><rect x="0.600" y="0.600" width="18.800" height="10.800" rx="1" stroke="#333" strokeWidth="1" /><path d="M3 3.500h14M3 6h14" stroke="#333" strokeWidth="1.200" strokeDasharray="1.200 1" /><path d="M5 8.700h10" stroke="#333" strokeWidth="1.200" /></svg>
        <span className="ml-[10px] w-[23px] shrink-0 pt-px text-[10px] tracking-[-0.400px]">ESP</span>
        <div className="flex w-[62px] shrink-0 flex-col items-center pt-px pl-[4px] text-[10px] leading-[15px] tracking-[-0.500px] whitespace-nowrap"><span>11:13 p. m.</span><span>18/09/2025</span></div>
        <svg viewBox="0 0 20 20" className="ml-[8px] h-5 w-5 shrink-0 overflow-visible" fill="none">
          <path d="M1 2h13v10H5l-3 3v-3H1z" fill="#111" />
          <path d="M3.500 5h8M3.500 8h8" stroke="#ccd8e0" strokeWidth="1.100" />
          <circle cx="14" cy="15" r="6" fill="#c6cfd5" stroke="#8a9298" strokeWidth="0.800" />
          <text x="14" y="18.700" fontSize="10" fill="#000" textAnchor="middle" fontFamily="'Noto Sans', sans-serif">4</text>
        </svg>
      </div>
    </div>
  );
}

const stats = [["Pads", "46", "w-[46px]"], ["Vías", "0", "w-[43.500px]"], ["Segmentos de pista", "58", "w-[113px]"], ["Redes", "10", "w-[52px]"], ["Sin enrutar", "0", "w-[80px]"]];
const status = [
  ["Se ha guardado el archivo 'D:\\Lorraine\\Escritorio\\hjb\\_autosave-hjb.kicad_pcb'.", "w-[392px] pl-[1px]"],
  ["Z 2.69", "w-[64px]"], ["X 95.0000  Y 23.0000", "w-[135px]"], ["dx 95.0000  dy 23.0000  dist 97.7446", "w-[214px]"],
  ["cuadrícula 0.5000", "w-[156px]"], ["mm", "w-[64px]"], ["Seleccionar elemento(s)", "w-[144px]"], ["", "flex-1"],
];
const menus = [["Archivo", "w-[46px]"], ["Editar", "w-[37.500px]"], ["Ver", "w-[26px]"], ["Añadir", "w-[41.500px]"], ["Enrutar", "w-[43px]"], ["Inspeccionar", "w-[67.500px]"], ["Herramientas", "w-[71px]"], ["Preferencias", "w-[66px]"], ["Ayuda", "w-[40px]"]];

export default function App() {
  return (
    <div className="flex h-[720px] w-[1280px] flex-col overflow-hidden bg-[#f0f0f0] font-['Open_Sans','Noto_Sans',sans-serif] text-[#1a1a1a] [text-rendering:geometricPrecision]">
      <div className="relative flex h-[20px] shrink-0 items-center bg-white pl-[2px] text-[10.400px] tracking-[-0.300px]">
        <svg viewBox="0 0 13 13" className="h-[13px] w-[13px]" fill="none">
          <rect width="13" height="13" rx="1" fill="#0f6a26" />
          <path d="M3 0v4l3 3v6M7 0v3l3 3v7M0 8l3 3" stroke="#083c12" strokeWidth="1.200" />
          <circle cx="2" cy="6" r="1" fill="#e3d13c" /><circle cx="10" cy="3" r="1" fill="#e3d13c" /><circle cx="9" cy="10" r="1" fill="#7cc04a" />
        </svg>
        <span className="ml-[3px] pt-[2px]">*hjb — Editor de placas</span>
        <div className="absolute top-0 left-[540px] flex h-px w-[200px] bg-[#1b1b1b]"><div className="w-[40px] bg-[#1b6fb8]" /></div>
        <div className="ml-auto flex items-center pr-[17px]">
          <svg viewBox="0 0 88 10" className="h-[10px] w-[88px]" fill="none"><path d="M1 5.500h8M40 3h6v6h-6zM42 3V1h6v6h-2M79 1l8 8M87 1l-8 8" stroke="#222" strokeWidth="0.900" /></svg>
        </div>
      </div>
      <div className="flex h-[15px] shrink-0 items-center bg-white pt-[3px] pl-[5px] text-[10.200px] tracking-[-0.380px]">
        {menus.map(([m, w]) => <div key={m} className={"shrink-0 whitespace-nowrap " + w}>{m}</div>)}
      </div>
      <TopToolbar />
      <OptionsBar />
      <div className="flex h-[547px] shrink-0 pt-px">
        <SideTools items={leftTools} className="w-[30px]" />
        <BoardCanvas />
        <SideTools items={rightTools} className="mr-[3px] w-[30px]" />
        <Panel />
      </div>
      <div className="flex h-[28px] shrink-0 pl-[9px] text-[10.200px] leading-[13px] tracking-[-0.280px]">
        {stats.map(([a, b, w]) => <div key={a} className={"flex shrink-0 flex-col pt-[2px] whitespace-nowrap " + w}><span>{a}</span><span>{b}</span></div>)}
      </div>
      <div className="flex h-[18px] shrink-0 border-t border-[#d5d5d5] text-[10.200px] tracking-[-0.370px]">
        {status.map(([t, w], i) => <div key={i} className={"flex shrink-0 items-center border-r border-[#dcdcdc] pt-px whitespace-pre " + (i ? "pl-[3px] " : "") + w}>{t}</div>)}
      </div>
      <Taskbar />
    </div>
  );
}
